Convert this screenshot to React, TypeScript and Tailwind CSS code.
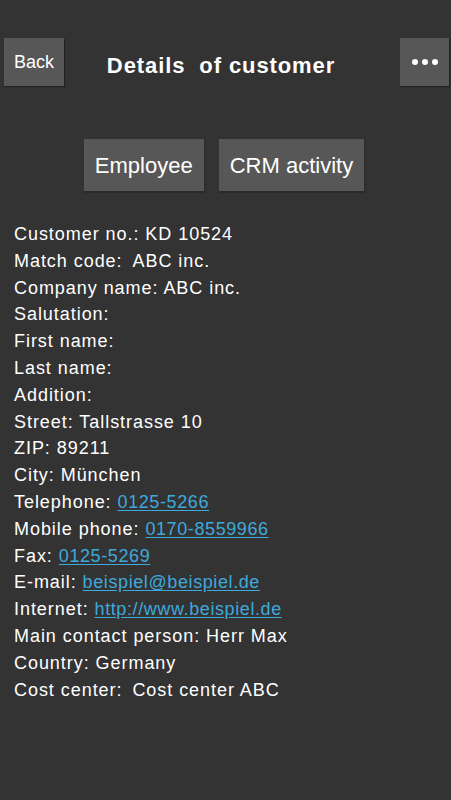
const fields: { label: string; value?: string; link?: boolean; gap?: boolean }[] = [
  { label: 'Customer no.:', value: 'KD 10524' },
  { label: 'Match code:', value: 'ABC inc.', gap: true },
  { label: 'Company name:', value: 'ABC inc.' },
  { label: 'Salutation:' },
  { label: 'First name:' },
  { label: 'Last name:' },
  { label: 'Addition:' },
  { label: 'Street:', value: 'Tallstrasse 10' },
  { label: 'ZIP:', value: '89211' },
  { label: 'City:', value: 'München' },
  { label: 'Telephone:', value: '0125-5266', link: true },
  { label: 'Mobile phone:', value: '0170-8559966', link: true },
  { label: 'Fax:', value: '0125-5269', link: true },
  { label: 'E-mail:', value: 'beispiel@beispiel.de', link: true },
  { label: 'Internet:', value: 'http://www.beispiel.de', link: true },
  { label: 'Main contact person:', value: 'Herr Max' },
  { label: 'Country:', value: 'Germany' },
  { label: 'Cost center:', value: 'Cost center ABC', gap: true },
];

export default function App() {
  return (
    <div className="min-h-[800px] w-full bg-[#333333] text-white font-['Liberation_Sans',Arial,sans-serif]">
      {/* Header */}
      <header className="flex items-center pt-[38px] pl-[4px] pr-[2px]">
        <button className="h-[48px] w-[60px] shrink-0 bg-[#575757] text-[18px] text-white shadow-[1px_1px_1px_rgba(0,0,0,0.35)]">
          Back
        </button>
        <h1 className="flex-1 pr-[22px] pt-[6px] text-center text-[22px] font-bold tracking-[0.9px]">
          Details&nbsp; of customer
        </h1>
        <button className="flex h-[48px] w-[49px] shrink-0 items-center justify-center gap-[4px] bg-[#575757] shadow-[1px_1px_1px_rgba(0,0,0,0.35)]">
          <span className="h-[6px] w-[6px] rounded-full bg-white" />
          <span className="h-[6px] w-[6px] rounded-full bg-white" />
          <span className="h-[6px] w-[6px] rounded-full bg-white" />
        </button>
      </header>

      {/* Tabs */}
      <div className="mt-[53px] flex justify-center gap-[14px] pr-[2px]">
        <button className="h-[54px] px-[11px] bg-[#575757] text-[22px] text-white border-b-[2px] border-r-[1px] border-[#2a2a2a]">
          Employee
        </button>
        <button className="h-[54px] px-[11px] bg-[#575757] text-[22px] text-white border-b-[2px] border-r-[1px] border-[#2a2a2a]">
          CRM activity
        </button>
      </div>

      {/* Fields */}
      <div className="mt-[28px] px-[14px] text-[18px] leading-[26.8px] tracking-[0.95px]">
        {fields.map((f) => (
          <div key={f.label}>
            {f.label}
            {f.value && ' '}
            {f.value &&
              (f.link ? (
                <a href="#" className="text-[#3ea9dc] underline underline-offset-[2px] tracking-[0.6px]">
                  {f.value}
                </a>
              ) : (
                <span className={f.gap ? 'ml-[4px]' : ''}>{f.value}</span>
              ))}
          </div>
        ))}
      </div>
    </div>
  );
}
